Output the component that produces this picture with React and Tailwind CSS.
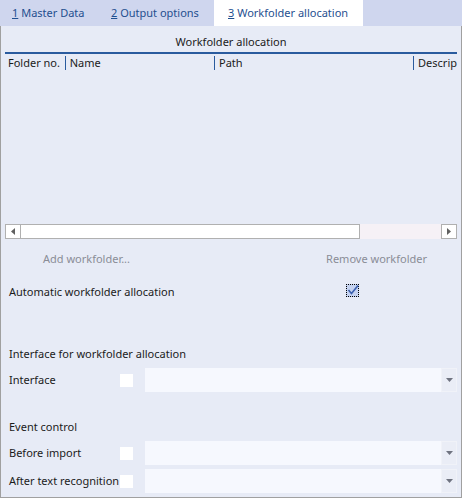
import React from "react";

const font = { fontFamily: '"Noto Sans", "Open Sans", sans-serif' };

function Dropdown() {
  return (
    <div className="flex h-[24px] flex-1 bg-[#f6f8fe]">
      <div className="flex-1" />
      <div className="flex w-[16px] items-center justify-center border border-[#f0f2f8] bg-[#eaedf6]">
        <svg width="7" height="4" viewBox="0 0 7 4"><path d="M0 0H7L3.5 4Z" fill="#6f7380" /></svg>
      </div>
    </div>
  );
}

function Check() {
  return <div className="h-[13px] w-[13px] shrink-0 bg-white" />;
}

export default function App() {
  return (
    <div className="h-[498px] w-[462px] bg-[#e7ebf6] text-[11px] text-[#1b1b1b]" style={font}>
      <div className="flex h-[26px] bg-[#cfd6ee] text-[#1f4f8f]">
        <div className="flex w-[99px] items-center pl-[12px]"><span><u>1</u> Master Data</span></div>
        <div className="flex w-[115px] items-center pl-[12px]"><span><u>2</u> Output options</span></div>
        <div className="flex w-[149px] items-center bg-white pl-[14px]"><span><u>3</u> Workfolder allocation</span></div>
      </div>
      <div className="flex h-[472px] flex-col border-x border-b border-[#a0a0a0] px-[4px]">
        <div className="mt-[8px] text-center leading-[16px]">Workfolder allocation</div>
        <div className="mt-[2px] h-[2px] bg-[#2a5b9e]" />
        <div className="flex h-[17px] items-center whitespace-nowrap leading-[15px]">
          <div className="w-[60px] pl-[3px]">Folder no.</div>
          <div className="h-[14px] w-px bg-[#2a5b9e]" />
          <div className="w-[149px] pl-[4px]">Name</div>
          <div className="h-[14px] w-px bg-[#2a5b9e]" />
          <div className="w-[199px] pl-[4px]">Path</div>
          <div className="h-[14px] w-px bg-[#2a5b9e]" />
          <div className="pl-[4px]">Descrip</div>
        </div>
        <div className="h-[153px]" />
        <div className="flex h-[15px]">
          <div className="flex w-[16px] items-center justify-center border border-[#b0b0b0] bg-white">
            <svg width="4" height="7" viewBox="0 0 4 7"><path d="M4 0V7L0 3.5Z" fill="#606060" /></svg>
          </div>
          <div className="w-[339px] border border-l-0 border-[#b0b0b0] bg-white" />
          <div className="flex-1 bg-[#f6f1f6]" />
          <div className="flex w-[16px] items-center justify-center border border-[#b0b0b0] bg-white">
            <svg width="4" height="7" viewBox="0 0 4 7"><path d="M0 0V7L4 3.5Z" fill="#606060" /></svg>
          </div>
        </div>
        <div className="mt-[12px] flex h-[16px] items-center text-[#8a8d96]">
          <div className="pl-[38px]">Add workfolder...</div>
          <div className="ml-auto pr-[30px]">Remove workfolder</div>
        </div>
        <div className="mt-[17px] flex h-[16px] items-center">
          <div className="w-[341px] pl-[4px]">Automatic workfolder allocation</div>
          <div className="relative mt-[-4px] h-[13px] w-[13px] border border-dotted border-black bg-[#c5d2f0]">
            <svg className="absolute left-[0px] top-[-1px]" width="12" height="12" viewBox="0 0 12 12"><path d="M1.5 6L4.5 9.5L11 1.5" fill="none" stroke="#3a5fae" strokeWidth="1.6" /></svg>
          </div>
        </div>
        <div className="mt-[46px] h-[16px] pl-[4px] leading-[16px]">Interface for workfolder allocation</div>
        <div className="mt-[6px] flex h-[24px] items-center">
          <div className="w-[115px] pl-[4px]">Interface</div>
          <Check />
          <div className="w-[12px]" />
          <Dropdown />
        </div>
        <div className="mt-[27px] h-[16px] pl-[4px] leading-[16px]">Event control</div>
        <div className="mt-[6px] flex h-[24px] items-center">
          <div className="w-[115px] pl-[4px]">Before import</div>
          <Check />
          <div className="w-[12px]" />
          <Dropdown />
        </div>
        <div className="mt-[4px] flex h-[24px] items-center">
          <div className="w-[115px] whitespace-nowrap pl-[4px]">After text recognition</div>
          <Check />
          <div className="w-[12px]" />
          <Dropdown />
        </div>
      </div>
    </div>
  );
}
